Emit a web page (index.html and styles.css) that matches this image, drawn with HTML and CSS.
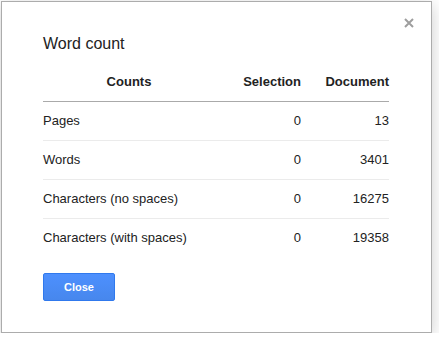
FILE: index.html
```html
<!DOCTYPE html>
<html>
<head>
  <title>Word count</title>
  <link rel="stylesheet" href="styles.css">
</head>
<body>
  <div class="dialog">
    <button class="dialog-close" title="Close">
      <svg width="10" height="10" viewBox="0 0 10 10">
        <path d="M1 1 L9 9 M9 1 L1 9" stroke="#9e9e9e" stroke-width="2" fill="none"/>
      </svg>
    </button>
    <h2 class="dialog-title">Word count</h2>
    <table class="count-table">
      <tr>
        <th class="col-label">Counts</th>
        <th class="col-num">Selection</th>
        <th class="col-num col-doc">Document</th>
      </tr>
      <tr>
        <td>Pages</td>
        <td class="col-num">0</td>
        <td class="col-num">13</td>
      </tr>
      <tr>
        <td>Words</td>
        <td class="col-num">0</td>
        <td class="col-num">3401</td>
      </tr>
      <tr>
        <td>Characters (no spaces)</td>
        <td class="col-num">0</td>
        <td class="col-num">16275</td>
      </tr>
      <tr>
        <td>Characters (with spaces)</td>
        <td class="col-num">0</td>
        <td class="col-num">19358</td>
      </tr>
    </table>
    <div class="dialog-buttons">
      <button class="btn-blue">Close</button>
    </div>
  </div>
</body>
</html>
```

FILE: styles.css
```css
body {
  font-family: "Liberation Sans", Arial, sans-serif;
  margin: 0;
  padding: 1px 0 0 1px;
  background: #fff;
  color: #222;
}

.dialog {
  position: relative;
  box-sizing: border-box;
  width: 431px;
  height: 332px;
  padding: 32px 42px 30px 41px;
  background: #fff;
  border: 1px solid #acacac;
  box-shadow: 0 4px 16px rgba(0, 0, 0, 0.2);
}

.dialog-close {
  position: absolute;
  top: 16px;
  right: 17px;
  width: 10px;
  height: 10px;
  padding: 0;
  border: none;
  background: none;
  cursor: pointer;
  display: block;
}

.dialog-close svg {
  display: block;
}

.dialog-title {
  margin: 0;
  font-size: 16px;
  font-weight: normal;
  line-height: 20px;
  color: #222;
}

.count-table {
  margin-top: 20px;
  width: 346px;
  border-collapse: collapse;
  font-size: 13px;
  line-height: 16px;
}

.count-table th {
  font-weight: bold;
  padding: 0 0 11px 0;
  border-bottom: 1px solid #aaa;
}

.count-table td {
  padding: 11px 0;
  border-bottom: 1px solid #ebebeb;
}

.count-table tr:last-child td {
  border-bottom: none;
}

.col-label {
  width: 172px;
  text-align: center;
}

.col-num {
  text-align: right;
  width: 86px;
}

.col-doc {
  width: 88px;
}

.dialog-buttons {
  margin-top: 16px;
}

.btn-blue {
  width: 72px;
  height: 28px;
  padding: 0;
  font-family: "Liberation Sans", Arial, sans-serif;
  font-size: 11px;
  font-weight: bold;
  color: #fff;
  background: linear-gradient(#4d90fe, #4787ed);
  border: 1px solid #3079ed;
  border-radius: 2px;
  cursor: pointer;
}
```
